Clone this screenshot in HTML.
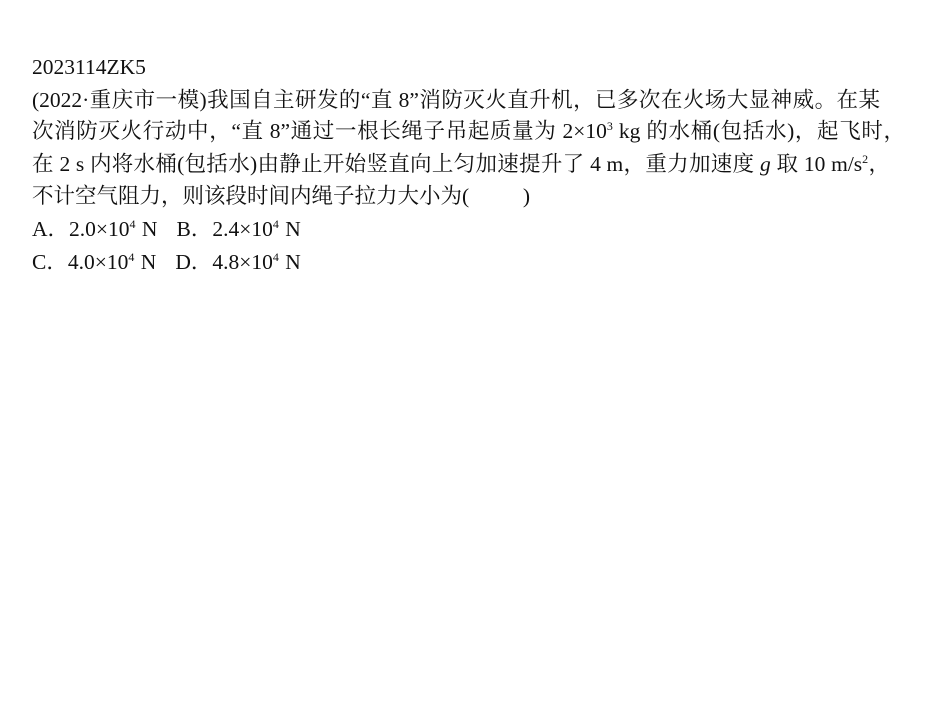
<!DOCTYPE html>
<html><head><meta charset="utf-8"><style>
body{margin:0;width:950px;height:710px;background:#fff;overflow:hidden}
.l{position:absolute;left:32px;height:32px;line-height:32px;font-family:"Liberation Serif","Noto Serif CJK SC",serif;font-size:21.5px;color:#111;white-space:nowrap}
.j{text-align:justify;text-align-last:justify;white-space:normal}
sup{font-size:12px;vertical-align:0;position:relative;top:-8px}
i{font-style:italic}
</style></head><body>
<div class="l" style="top:51px">2023114ZK5</div>
<div class="l j" style="top:84px;width:848px">(2022·重庆市一模)我国自主研发的“直 8”消防灭火直升机，已多次在火场大显神威。在某</div>
<div class="l j" style="top:115px;width:873px">次消防灭火行动中，“直 8”通过一根长绳子吊起质量为 2×10<sup>3</sup> kg 的水桶(包括水)，起飞时，</div>
<div class="l j" style="top:148px;width:858px">在 2 s 内将水桶(包括水)由静止开始竖直向上匀加速提升了 4 m，重力加速度 <i>g</i> 取 10 m/s<sup>2</sup>，</div>
<div class="l" style="top:180px">不计空气阻力，则该段时间内绳子拉力大小为(&nbsp;&nbsp;&nbsp;&nbsp;&nbsp;&nbsp;&nbsp;&nbsp;&nbsp;&nbsp;)</div>
<div class="l" style="top:213px;word-spacing:1px">A．2.0×10<sup>4</sup> N&nbsp;&nbsp;&nbsp;B．2.4×10<sup>4</sup> N</div>
<div class="l" style="top:246px;word-spacing:1px">C．4.0×10<sup>4</sup> N&nbsp;&nbsp;&nbsp;D．4.8×10<sup>4</sup> N</div>
</body></html>
